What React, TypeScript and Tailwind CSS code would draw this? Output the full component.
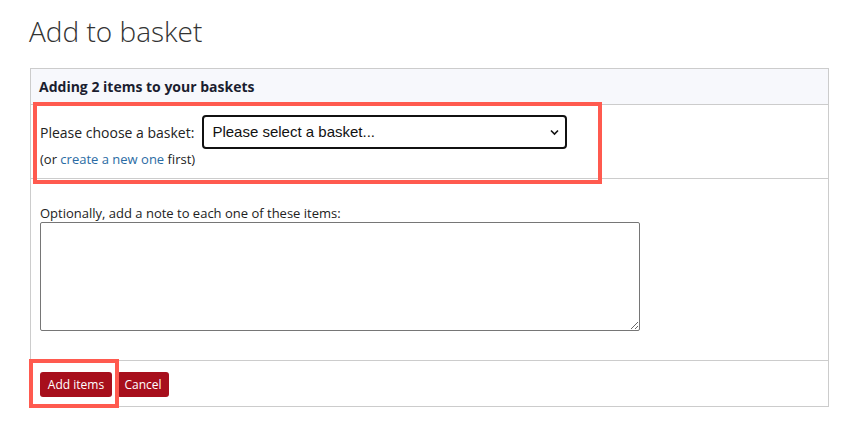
import React from 'react';

const font = { fontFamily: '"Open Sans", "Noto Sans", sans-serif' };

export default function App() {
  return (
    <div className="min-h-[435px] bg-white text-[#222]" style={font}>
      <div className="pl-[30px] pr-[32px] pt-[11px]">
        <h1 className="text-[28px] font-light leading-[40px] text-[#333] -ml-[1px]">Add to basket</h1>

        <div className="relative mt-[17px] border border-[#cccccc]">
          <div className="h-[36px] bg-[#f7f8fc] border-b border-[#cccccc] pl-[8px] flex items-center">
            <span className="text-[14px] font-bold text-[#1b1e30]">Adding 2 items to your baskets</span>
          </div>

          <div className="border-b border-[#cccccc] pl-[9px] pt-[10px] h-[74px]">
            <div className="flex items-center gap-[8px]">
              <label className="text-[14px] text-[#222]">Please choose a basket:</label>
              <div className="relative w-[365px] h-[34px] border-2 border-[#111] rounded-[4px] flex items-center pl-[8px]">
                <span className="text-[15px] text-[#111]" style={{ fontFamily: '"Liberation Sans", Arial, sans-serif' }}>
                  Please select a basket...
                </span>
                <svg className="absolute right-[6px] top-[12px]" width="9" height="7" viewBox="0 0 9 7" fill="none">
                  <path d="M1 1.5 L4.5 5 L8 1.5" stroke="#111" strokeWidth="1.6" />
                </svg>
              </div>
            </div>
            <div className="text-[13px] mt-[1px] leading-[18px]">
              (or <a className="text-[#2a6ba3]">create a new one</a> first)
            </div>
          </div>

          <div className="border-b border-[#cccccc] pl-[9px] pt-[26px] h-[182px]">
            <div className="text-[13px] leading-[16px] text-[#222]">Optionally, add a note to each one of these items:</div>
            <textarea className="block mt-[1px] w-[600px] h-[109px] border border-[#767676] rounded-[2px] outline-none"></textarea>
          </div>

          <div className="pl-[9px] pt-[11px] h-[45px] flex gap-[5px]">
            <button className="h-[25px] w-[72px] rounded-[3px] bg-[#a70f1c] text-white text-[12px] font-medium">Add items</button>
            <button className="h-[25px] w-[52px] rounded-[3px] bg-[#a70f1c] text-white text-[12px] font-medium">Cancel</button>
          </div>

          <div className="absolute left-[2px] top-[33px] w-[569px] h-[82px] border-4 border-[#ff5a4f] pointer-events-none"></div>
          <div className="absolute left-[-2px] top-[290px] w-[90px] h-[49px] border-4 border-[#ff5a4f] pointer-events-none"></div>
        </div>
      </div>
    </div>
  );
}
